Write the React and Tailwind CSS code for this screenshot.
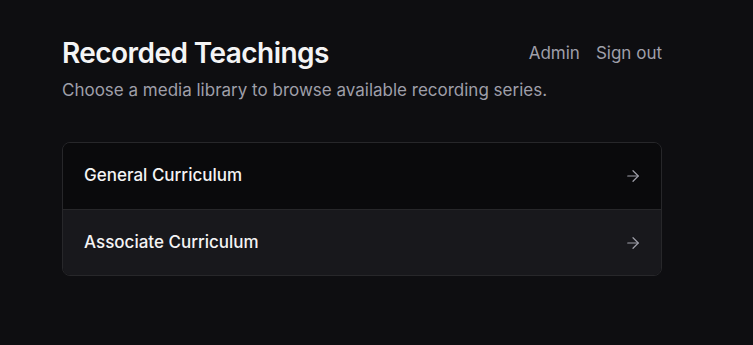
import { ArrowRight } from 'lucide-react'

const libraries = [
  { name: 'General Curriculum', tone: 'bg-[#0a0a0c]' },
  { name: 'Associate Curriculum', tone: 'bg-[#18181c]' },
]

export default function App() {
  return (
    <div className="min-h-screen bg-[#0e0e11] font-['Inter',sans-serif] text-zinc-100">
      <div className="ml-[62px] w-[600px] pt-[35px]">
        <header>
          <div className="flex items-start justify-between">
            <h1 className="whitespace-nowrap text-[28px] font-semibold leading-[36px] tracking-[-0.02em] text-zinc-100">
              Recorded Teachings
            </h1>
            <nav className="flex items-center gap-4 whitespace-nowrap pt-[6px] text-[17px] leading-6 text-zinc-400">
              <a href="#" className="hover:text-zinc-200">Admin</a>
              <a href="#" className="hover:text-zinc-200">Sign out</a>
            </nav>
          </div>
          <p className="mt-[7px] whitespace-nowrap text-[17px] leading-6 text-zinc-400">
            Choose a media library to browse available recording series.
          </p>
        </header>

        <ul className="mt-[40px] overflow-hidden rounded-lg border border-zinc-800">
          {libraries.map((lib, i) => (
            <li
              key={lib.name}
              className={`${lib.tone} ${i > 0 ? 'border-t border-zinc-800' : ''} flex h-[66px] items-center justify-between pl-[21px] pr-[19px]`}
            >
              <span className="text-[17px] font-medium text-zinc-100">{lib.name}</span>
              <ArrowRight className="h-[18px] w-[18px] text-zinc-400" strokeWidth={1.6} />
            </li>
          ))}
        </ul>
      </div>
    </div>
  )
}
